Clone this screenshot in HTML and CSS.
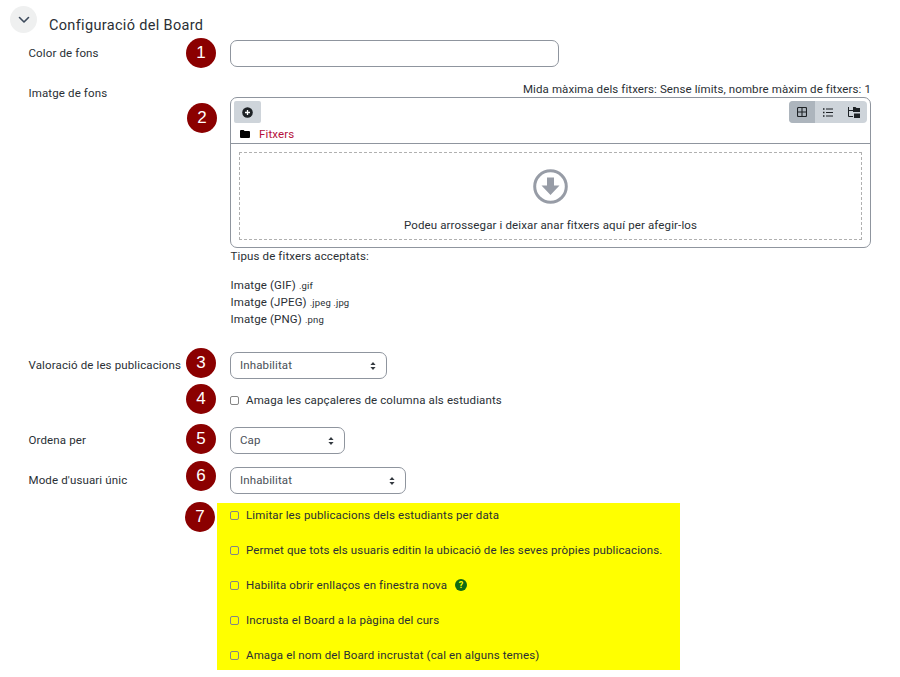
FILE: index.html
```html
<!DOCTYPE html>
<html lang="ca">
<head>
<meta charset="utf-8">
<title>Configuració del Board</title>
<link rel="stylesheet" href="styles.css">
</head>
<body>
<main class="page">
  <header class="section-head">
    <span class="chevron-btn">
      <svg width="12" height="8" viewBox="0 0 12 8"><path d="M1.5 1.5 6 6l4.5-4.5" fill="none" stroke="#3d4a5c" stroke-width="1.6" stroke-linecap="round" stroke-linejoin="round"/></svg>
    </span>
    <h2 class="section-title">Configuració del Board</h2>
  </header>

  <div class="row row-color">
    <label class="label">Color de fons</label>
    <div class="field"><input class="text-input" type="text"></div>
  </div>

  <div class="row row-image">
    <label class="label label-image">Imatge de fons</label>
    <div class="field">
      <div class="limits">Mida màxima dels fitxers: Sense límits, nombre màxim de fitxers: 1</div>
      <div class="picker">
        <div class="picker-top">
          <div class="picker-left">
            <span class="add-btn">
              <svg width="11" height="11" viewBox="0 0 11 11"><circle cx="5.5" cy="5.5" r="5.3" fill="#1d2125"/><path d="M5.5 3v5M3 5.5h5" stroke="#fff" stroke-width="1.3"/></svg>
            </span>
            <div class="crumb">
              <svg width="10" height="8" viewBox="0 0 10 8"><path d="M0 1a1 1 0 0 1 1-1h2.6l1 1H9a1 1 0 0 1 1 1v5a1 1 0 0 1-1 1H1a1 1 0 0 1-1-1z" fill="#000"/></svg>
              <a class="crumb-link">Fitxers</a>
            </div>
          </div>
          <div class="views">
            <span class="view view-active">
              <svg width="10" height="10" viewBox="0 0 10 10"><path d="M1.5.5h7a1 1 0 0 1 1 1v7a1 1 0 0 1-1 1h-7a1 1 0 0 1-1-1v-7a1 1 0 0 1 1-1zM5 .5v9M.5 5h9" fill="none" stroke="#1d2125" stroke-width="1.1"/></svg>
            </span>
            <span class="view">
              <svg width="10" height="9" viewBox="0 0 10 9"><path d="M3 1h7M3 4.5h7M3 8h7" stroke="#1d2125" stroke-width="1"/><path d="M0 .3h1.5v1.4H0zM0 3.8h1.5v1.4H0zM0 7.3h1.5v1.4H0z" fill="#1d2125"/></svg>
            </span>
            <span class="view">
              <svg width="12" height="11" viewBox="0 0 12 11"><path d="M.5 0v9.5H5M.5 3.5H5" fill="none" stroke="#1d2125" stroke-width="1"/><path d="M5 0h2.5l1 1H12v4H5zM6 6.5h6V11H6z" fill="#1d2125"/></svg>
            </span>
          </div>
        </div>
        <div class="dropzone-wrap">
          <div class="dropzone">
            <svg class="drop-icon" width="35" height="35" viewBox="0 0 35 35"><circle cx="17.5" cy="17.5" r="15.8" fill="none" stroke="#979ca6" stroke-width="3"/><path d="M14 8.5h7v8h5.5l-9 9.5-9-9.5H14z" fill="#979ca6"/></svg>
            <div class="drop-text">Podeu arrossegar i deixar anar fitxers aquí per afegir-los</div>
          </div>
        </div>
      </div>
      <div class="accepted">
        <p class="accepted-title">Tipus de fitxers acceptats:</p>
        <ul class="types">
          <li>Imatge (GIF) <small>.gif</small></li>
          <li>Imatge (JPEG) <small>.jpeg .jpg</small></li>
          <li>Imatge (PNG) <small>.png</small></li>
        </ul>
      </div>
    </div>
  </div>

  <div class="row row-rating">
    <label class="label">Valoració de les publicacions</label>
    <div class="field"><select class="select select-rating"><option>Inhabilitat</option></select></div>
  </div>

  <div class="row row-hide">
    <div class="label"></div>
    <div class="field"><label class="check"><input type="checkbox"><span>Amaga les capçaleres de columna als estudiants</span></label></div>
  </div>

  <div class="row row-order">
    <label class="label">Ordena per</label>
    <div class="field"><select class="select select-order"><option>Cap</option></select></div>
  </div>

  <div class="row row-single">
    <label class="label">Mode d'usuari únic</label>
    <div class="field"><select class="select select-single"><option>Inhabilitat</option></select></div>
  </div>

  <section class="highlight">
    <label class="check"><input type="checkbox"><span>Limitar les publicacions dels estudiants per data</span></label>
    <label class="check"><input type="checkbox"><span>Permet que tots els usuaris editin la ubicació de les seves pròpies publicacions.</span></label>
    <label class="check"><input type="checkbox"><span>Habilita obrir enllaços en finestra nova</span>
      <svg class="help" width="12" height="12" viewBox="0 0 12 12"><circle cx="6" cy="6" r="6" fill="#0f6a14"/><text x="6" y="9.2" text-anchor="middle" class="help-q">?</text></svg>
    </label>
    <label class="check"><input type="checkbox"><span>Incrusta el Board a la pàgina del curs</span></label>
    <label class="check"><input type="checkbox"><span>Amaga el nom del Board incrustat (cal en alguns temes)</span></label>
  </section>

  <span class="badge b1">1</span>
  <span class="badge b2">2</span>
  <span class="badge b3">3</span>
  <span class="badge b4">4</span>
  <span class="badge b5">5</span>
  <span class="badge b6">6</span>
  <span class="badge b7">7</span>
</main>
</body>
</html>
```

FILE: styles.css
```css
* { box-sizing: border-box; }
html, body { margin: 0; padding: 0; background: #fff; }
body {
  font-family: Roboto, "Liberation Sans", sans-serif;
  font-size: 11.5px;
  color: #2a2f35;
  letter-spacing: 0.13px;
}
.page { position: relative; width: 900px; height: 677px; overflow: hidden; padding-top: 6px; }

.section-head { display: flex; height: 34px; padding-left: 10px; }
.chevron-btn {
  width: 27px; height: 27px; border-radius: 50%; background: #eff0f0;
  display: flex; align-items: center; justify-content: center;
}
.section-title { margin: 10px 0 0 12px; font-size: 14.5px; font-weight: 400; line-height: 19px; letter-spacing: 0.33px; }

.row { display: flex; }
.label { width: 230px; flex: none; padding-left: 28.5px; line-height: 16px; }
.field { flex: none; }

.row-color { height: 57px; }
.row-color .label { padding-top: 5px; }
.text-input { display: block; width: 329px; height: 27px; border: 1px solid #8f959e; border-radius: 7px; background: #fff; }

.row-image { height: 255px; }
.label-image { margin-top: -12px; }
.limits { text-align: right; width: 641px; height: 16px; margin-top: -16px; line-height: 16px; letter-spacing: 0.1px; }
.picker { width: 641px; height: 151px; border: 1px solid #8f959e; border-radius: 7px; }
.picker-top { height: 46px; border-bottom: 1px solid #8f959e; display: flex; justify-content: space-between; padding: 3px 3px 0 3px; }
.add-btn { display: flex; width: 27px; height: 22px; background: #ced4da; border-radius: 2px; align-items: center; justify-content: center; }
.crumb { display: flex; align-items: center; gap: 9px; padding-left: 6px; margin-top: 4px; height: 14px; }
.crumb-link { color: #b5103c; }
.views { display: flex; height: 22px; background: #ced4da; border-radius: 4px; overflow: hidden; }
.view { width: 26px; display: flex; align-items: center; justify-content: center; }
.view-active { background: #adb5bd; }
.dropzone-wrap { padding: 8px; }
.dropzone { height: 88px; border: 1px dashed #b0b0b0; display: flex; flex-direction: column; align-items: center; padding-top: 16px; }
.drop-text { margin-top: 13px; line-height: 16px; }
.drop-icon { display: block; }
.accepted { line-height: 17px; padding-left: 0.5px; }
.accepted-title { margin: 0 0 12px; height: 17px; }
.types { list-style: none; margin: 0; padding: 0; }
.types small { font-size: 9.5px; }

.row-rating { height: 48px; }
.row-rating .label { padding-top: 5px; }
.row-hide { height: 27px; }
.row-hide .check { height: 16px; margin-top: -8px; }
.row-order { height: 40px; }
.row-order .label { padding-top: 5px; }
.row-single { height: 36px; }
.row-single .label { padding-top: 5px; }

.select {
  display: block; height: 27px; border: 1px solid #8f959e; border-radius: 7px; padding: 0 0 2px 9px;
  font: inherit; letter-spacing: inherit; color: #495057; background: #fff;
  appearance: none; -webkit-appearance: none;
  background-image: url("data:image/svg+xml,%3Csvg xmlns='http://www.w3.org/2000/svg' width='6' height='8'%3E%3Cpath d='M3 0l2.6 3H.4zM3 8L.4 5h5.2z' fill='%23343a40'/%3E%3C/svg%3E");
  background-repeat: no-repeat; background-position: right 10px center;
}
.select-rating { width: 157px; }
.select-order { width: 115px; }
.select-single { width: 176px; }

.check { display: flex; align-items: center; line-height: 16px; }
.check input {
  appearance: none; -webkit-appearance: none; margin: 0 7px 0 0; width: 9px; height: 9px;
  border: 1px solid #858585; border-radius: 2px; background: #fff; flex: none;
}
.highlight {
  margin-left: 217px; width: 463px; height: 167px; background: #ff0;
  display: flex; flex-direction: column; justify-content: space-between; padding: 4px 0 7px 13px;
}
.highlight .check input { background: transparent; }
.highlight .check { height: 16px; }
.help { margin-left: 8px; flex: none; }
.help-q { font: 700 9px Roboto, sans-serif; fill: #ff0; letter-spacing: 0; }

.badge {
  position: absolute; left: 186px; width: 30px; height: 30px; border-radius: 50%;
  background: #8b0000; color: #fff; font: 17px/30px "Liberation Sans", sans-serif;
  text-align: center; letter-spacing: 0;
}
.b1 { top: 38px; }
.b2 { top: 103px; left: 187px; }
.b3 { top: 348px; }
.b4 { top: 384px; }
.b5 { top: 424px; }
.b6 { top: 461px; }
.b7 { top: 502px; left: 185px; }
```
